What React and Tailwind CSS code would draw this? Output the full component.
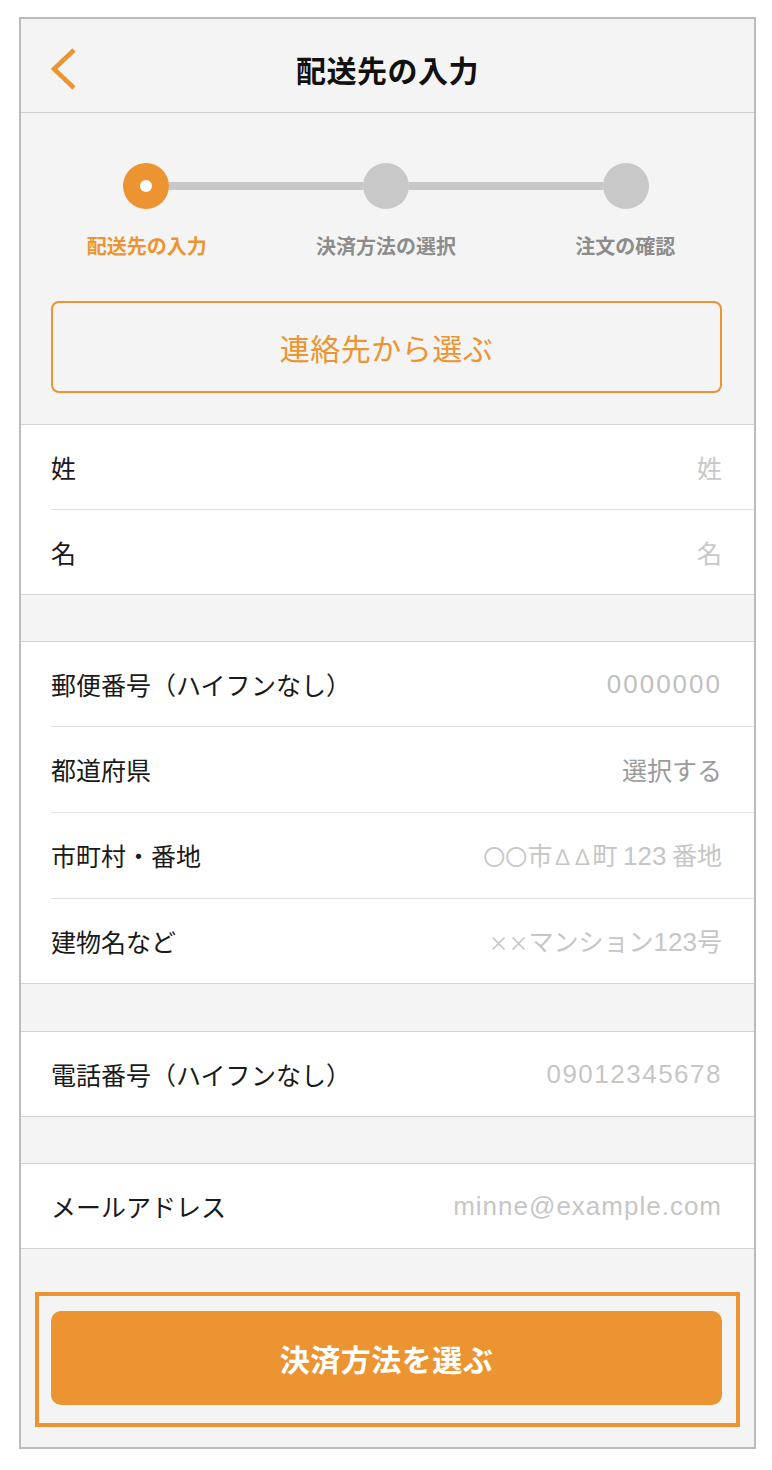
import React from "react";

const F = { fontFamily: '"Noto Sans CJK JP", "Noto Sans", sans-serif' };
const L = { fontFamily: '"Liberation Sans", "Noto Sans CJK JP", sans-serif' };

function Row({ label, value, valueClass = "text-[#c6c6c6]", valueStyle, h = "h-[84px]", divider = true }) {
  return (
    <div className="flex flex-col">
      <div className={`${h} flex items-center justify-between pl-[30px] pr-[32px]`}>
        <span className="text-[25px] text-[#1a1a1a] leading-none">{label}</span>
        <span className={`leading-none ${valueClass}`} style={valueStyle}>{value}</span>
      </div>
      {divider && <div className="ml-[30px] h-px bg-[#e2e2e2]" />}
    </div>
  );
}

function Section({ children }) {
  return <div className="bg-white border-y border-[#d3d3d3] flex flex-col">{children}</div>;
}

export default function App() {
  return (
    <div className="w-[772px] h-[1470px] bg-white pt-[17px] pl-[19px]" style={F}>
      <div className="w-[737px] h-[1432px] border-2 border-[#bcbcbc] bg-[#f4f4f4] flex flex-col">
        {/* header */}
        <div className="h-[94px] border-b border-[#cfcfcf] grid grid-cols-[1fr_auto_1fr] items-center pt-[6px]">
          <div className="pl-[28px] flex items-center">
            <svg width="30" height="44" viewBox="0 0 30 44">
              <path d="M25 3 L5 22 L25 41" fill="none" stroke="#ec9432" strokeWidth="4.5" strokeLinecap="butt" strokeLinejoin="miter" />
            </svg>
          </div>
          <div className="text-[30px] font-bold text-[#111] leading-none tracking-[0.5px]">配送先の入力</div>
          <div />
        </div>

        {/* stepper */}
        <div className="pt-[50px] flex flex-col">
          <div className="ml-[102px] w-[526px] flex items-center">
            <div className="w-[46px] h-[46px] rounded-full bg-[#ec9432] flex items-center justify-center">
              <div className="w-[12px] h-[12px] rounded-full bg-white" />
            </div>
            <div className="flex-1 h-[8px] bg-[#c8c8c8]" />
            <div className="w-[46px] h-[46px] rounded-full bg-[#c8c8c8]" />
            <div className="flex-1 h-[8px] bg-[#c8c8c8]" />
            <div className="w-[46px] h-[46px] rounded-full bg-[#c8c8c8]" />
          </div>
          <div className="mt-[23px] ml-[6px] w-[718px] grid grid-cols-3 text-[20px] font-bold leading-[28px] text-center">
            <span className="text-[#ec9432]">配送先の入力</span>
            <span className="text-[#8c8c8c]">決済方法の選択</span>
            <span className="text-[#8c8c8c]">注文の確認</span>
          </div>
        </div>

        {/* contact button */}
        <div className="mt-[41px] pl-[30px] pr-[32px] pb-[31px]">
          <div className="h-[92px] border-2 border-[#ec9432] rounded-[8px] flex items-center justify-center text-[30px] text-[#ec9432] leading-none tracking-[0.5px]">
            連絡先から選ぶ
          </div>
        </div>

        <Section>
          <Row label="姓" value="姓" valueClass="text-[25px] text-[#c8c8c8]" />
          <Row label="名" value="名" valueClass="text-[25px] text-[#c8c8c8]" divider={false} />
        </Section>

        <div className="h-[46px]" />

        <Section>
          <Row label="郵便番号（ハイフンなし）" value="0000000" valueClass="text-[26px] text-[#bfbfbf] tracking-[2px]" valueStyle={L} />
          <Row label="都道府県" value="選択する" valueClass="text-[25px] text-[#9a9a9a]" h="h-[85px]" />
          <Row
            label="市町村・番地"
            value={<><span className="text-[22px]">〇〇</span>市<span className="text-[20px]">∆∆</span>町 <span style={L} className="text-[26px]">123</span> 番地</>}
            valueClass="text-[25px] text-[#c6c6c6]"
            h="h-[85px]"
          />
          <Row
            label="建物名など"
            value={<><span className="text-[20px]">××</span>マンション<span style={L} className="text-[26px]">123</span>号</>}
            valueClass="text-[25px] text-[#c6c6c6]"
            divider={false}
          />
        </Section>

        <div className="h-[47px]" />

        <Section>
          <Row label="電話番号（ハイフンなし）" value="09012345678" valueClass="text-[26px] text-[#c6c6c6] tracking-[1.5px]" valueStyle={L} divider={false} />
        </Section>

        <div className="h-[46px]" />

        <Section>
          <Row label="メールアドレス" value="minne@example.com" valueClass="text-[26px] text-[#c6c6c6] tracking-[1px]" valueStyle={L} divider={false} />
        </Section>

        <div className="mt-[43px] mx-[14px] border-4 border-[#ec9432] pt-[15px] pb-[18px] pl-[12px] pr-[14px]">
          <div className="h-[94px] rounded-[10px] bg-[#ec9432] flex items-center justify-center text-[30px] font-bold text-white leading-none tracking-[0.5px]">
            決済方法を選ぶ
          </div>
        </div>
      </div>
    </div>
  );
}
